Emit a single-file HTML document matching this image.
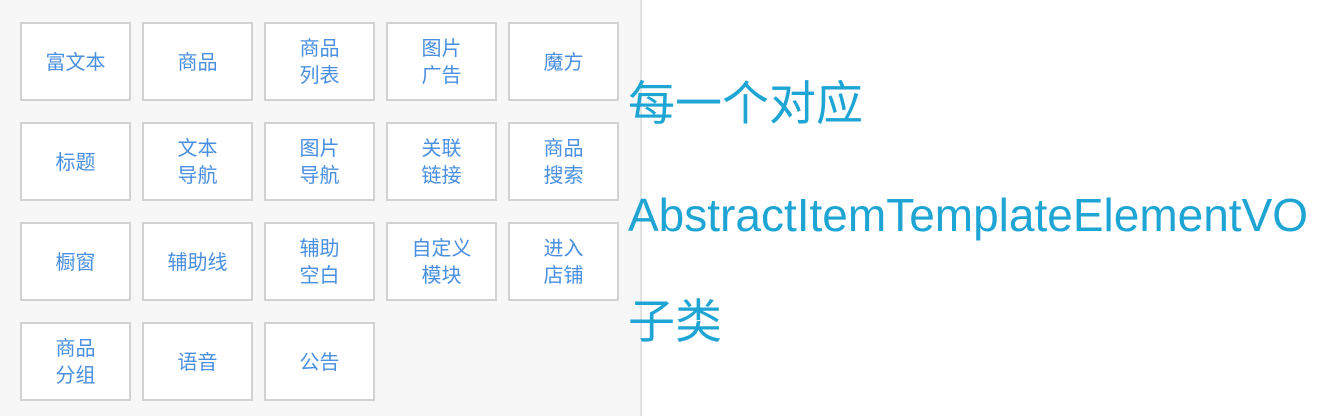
<!DOCTYPE html>
<html><head><meta charset="utf-8"><style>
body{margin:0;width:1322px;height:416px;background:#fff;position:relative;overflow:hidden;font-family:"Liberation Sans","Noto Sans CJK SC",sans-serif}
#panel{position:absolute;left:0;top:0;width:640px;height:416px;background:#f7f7f7;border-right:2px solid #e2e2e2}
.b{position:absolute;box-sizing:border-box;width:111px;height:79px;padding-top:3px;background:#fff;border:2px solid #d2d2d2;display:flex;align-items:center;justify-content:center;text-align:center;color:#4a8fe0;font-size:20px;line-height:27px}
.t{position:absolute;left:628px;color:#1ea5d4;white-space:nowrap}
</style></head><body>
<div id="panel">
<div class="b" style="left:20px;top:22px">富文本</div>
<div class="b" style="left:142px;top:22px">商品</div>
<div class="b" style="left:264px;top:22px">商品<br>列表</div>
<div class="b" style="left:386px;top:22px">图片<br>广告</div>
<div class="b" style="left:508px;top:22px">魔方</div>
<div class="b" style="left:20px;top:122px">标题</div>
<div class="b" style="left:142px;top:122px">文本<br>导航</div>
<div class="b" style="left:264px;top:122px">图片<br>导航</div>
<div class="b" style="left:386px;top:122px">关联<br>链接</div>
<div class="b" style="left:508px;top:122px">商品<br>搜索</div>
<div class="b" style="left:20px;top:222px">橱窗</div>
<div class="b" style="left:142px;top:222px">辅助线</div>
<div class="b" style="left:264px;top:222px">辅助<br>空白</div>
<div class="b" style="left:386px;top:222px">自定义<br>模块</div>
<div class="b" style="left:508px;top:222px">进入<br>店铺</div>
<div class="b" style="left:20px;top:322px">商品<br>分组</div>
<div class="b" style="left:142px;top:322px">语音</div>
<div class="b" style="left:264px;top:322px">公告</div>
</div>
<div class="t" style="top:74px;font-size:47px;line-height:60px">每一个对应</div>
<div class="t" style="top:185px;font-size:46px;line-height:60px">AbstractItemTemplateElementVO</div>
<div class="t" style="top:292px;font-size:47px;line-height:60px">子类</div>
</body></html>
